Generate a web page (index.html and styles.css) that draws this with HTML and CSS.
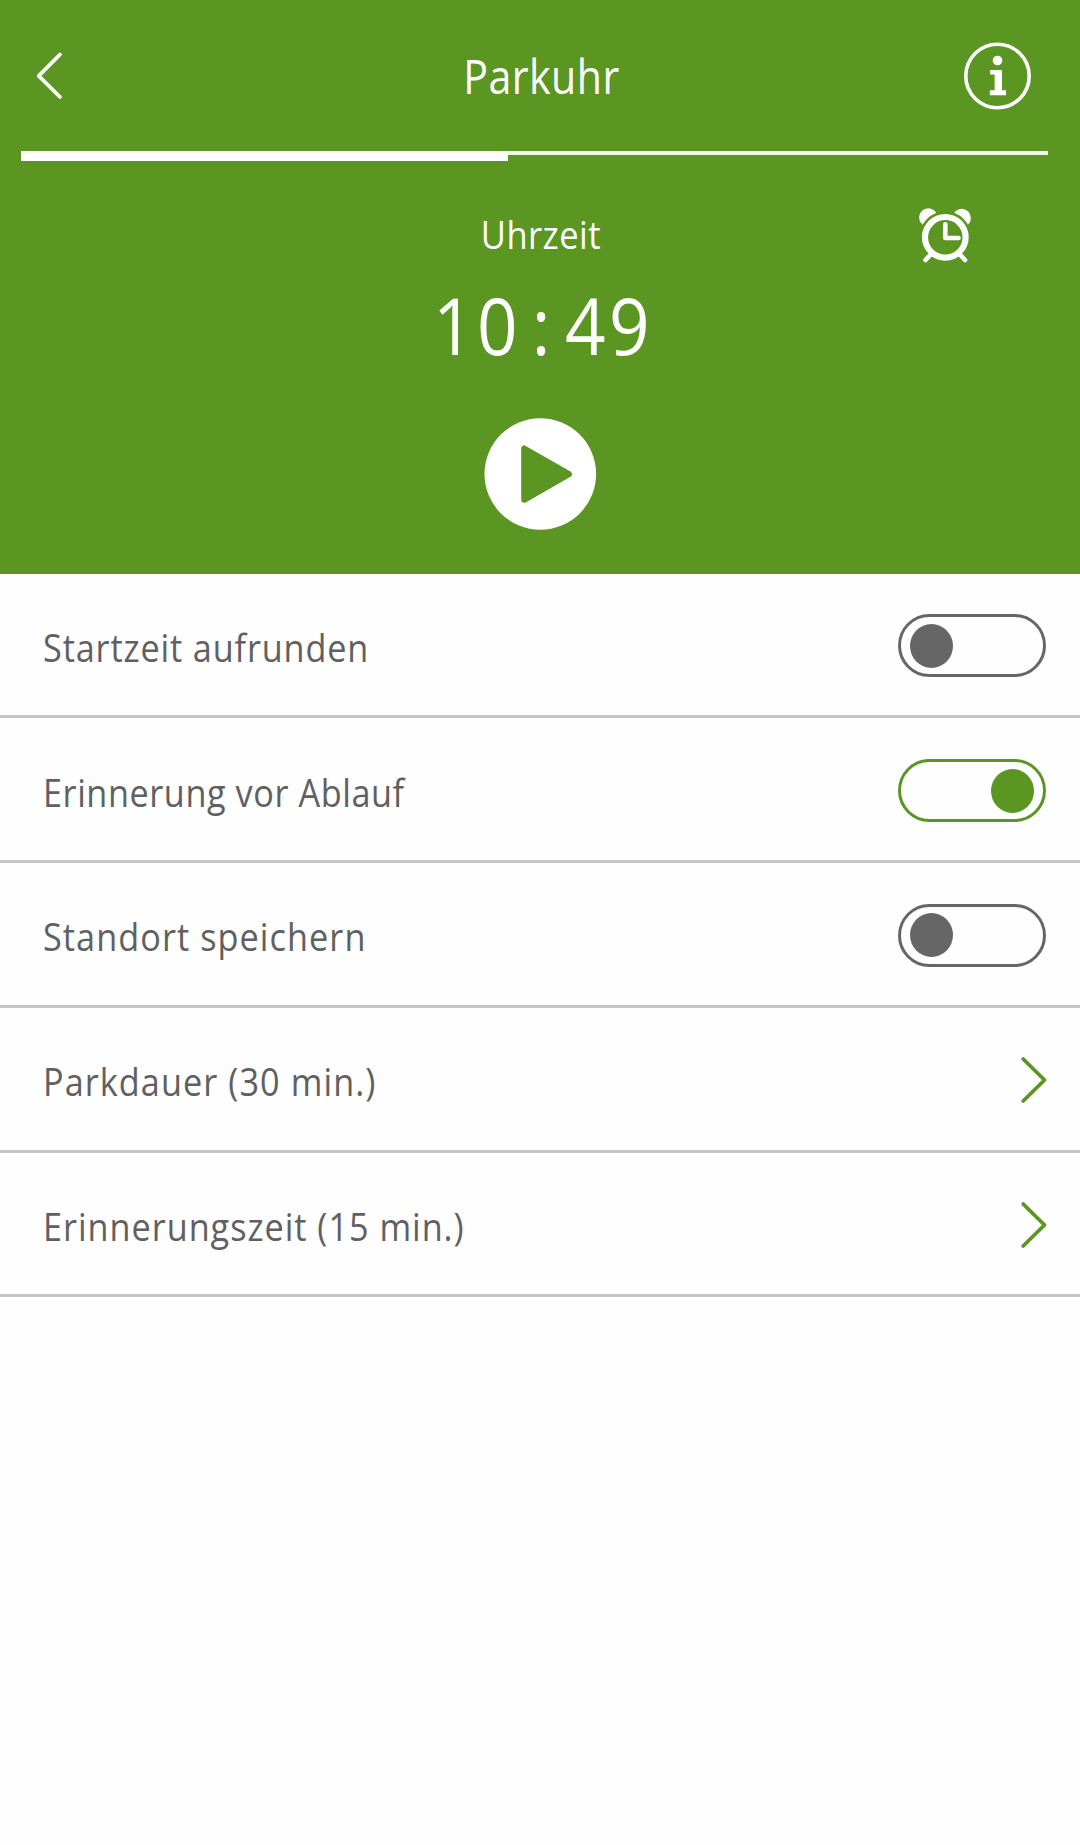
FILE: index.html
```html
<!DOCTYPE html>
<html lang="de">
<head>
<meta charset="utf-8">
<title>Parkuhr</title>
<link rel="stylesheet" href="styles.css">
</head>
<body>
<header class="hero">
  <div class="topbar">
    <svg class="back" viewBox="0 0 30 50"><path d="M26 3.500 4.700 24.800l21.300 21.200"/></svg>
    <h1 class="title">Parkuhr</h1>
    <svg class="info" viewBox="0 0 68 68">
      <circle class="ring" cx="33.500" cy="34" r="31.700"/>
      <circle cx="33.500" cy="18.500" r="4.800"/>
      <path d="M26 28h12v20.200h4v5H25.800v-5h4.800V32.500H26z"/>
    </svg>
  </div>
  <div class="track"><div class="progress"></div></div>
  <div class="clock">
    <div class="label">Uhrzeit</div>
    <svg class="alarm" viewBox="0 0 54 56">
      <circle cx="10.300" cy="10.500" r="9.200"/>
      <circle cx="43.700" cy="11" r="9.200"/>
      <circle class="gap" cx="27.300" cy="30.300" r="26"/>
      <path class="legs" d="M14 46l-6.500 7M40.500 46l6.500 7"/>
      <circle class="dial" cx="27.300" cy="30.300" r="20.300"/>
      <path class="hands" d="M27.300 17.300V31H40.500"/>
    </svg>
  </div>
  <div class="time"><span>1</span><span>0</span><span>:</span><span>4</span><span>9</span></div>
  <svg class="play" viewBox="0 0 113 112"><circle cx="56.300" cy="56" r="55.800"/><path d="M40.200 30.500v51.300L85 56.200z"/></svg>
</header>
<main class="list">
  <div class="row"><span class="text">Startzeit aufrunden</span><div class="toggle"><i class="knob"></i></div></div>
  <div class="row"><span class="text">Erinnerung vor Ablauf</span><div class="toggle on"><i class="knob"></i></div></div>
  <div class="row"><span class="text">Standort speichern</span><div class="toggle"><i class="knob"></i></div></div>
  <div class="row"><span class="text">Parkdauer (30 min.)</span><svg class="next" viewBox="0 0 30 50"><path d="M5.200 4 26.500 25 5.200 46"/></svg></div>
  <div class="row"><span class="text">Erinnerungszeit (15 min.)</span><svg class="next" viewBox="0 0 30 50"><path d="M5.200 4 26.500 25 5.200 46"/></svg></div>
</main>
</body>
</html>
```
FILE: styles.css
```css
* { box-sizing: border-box; }
body {
  margin: 0;
  min-height: 1845px;
  background: #fefefe;
  color: #606060;
  font-family: "Open Sans", sans-serif;
}
svg { display: block; flex: none; }
.hero {
  height: 573.500px;
  background: #5a9621;
  color: #fff;
  display: flex;
  flex-direction: column;
}
.topbar {
  height: 151px;
  padding: 0 48px 0 34px;
  display: grid;
  grid-template-columns: 68px 1fr 68px;
}
.back { width: 30px; height: 50px; margin-top: 51px; }
.back path, .next path { fill: none; stroke: #fff; stroke-width: 3.800; stroke-linecap: round; stroke-linejoin: round; }
.title { margin: 44px 0 0 17px; font-size: 47px; line-height: 64px; font-weight: 400; text-align: center; letter-spacing: .5px; transform: scaleX(.875); }
.info { width: 68px; height: 68px; margin-top: 42px; fill: #fff; }
.ring { fill: none; stroke: #fff; stroke-width: 3.600; }
.track { height: 10px; margin: 0 32px 0 21px; border-top: 4px solid #f4f9ef; }
.progress { width: 487px; height: 10px; margin-top: -4px; background: #fff; }
.clock { height: 116px; display: grid; grid-template-columns: 1fr auto 1fr; }
.label { grid-column: 2; margin: 47px 0 0 1px; font-size: 39px; line-height: 52px; letter-spacing: .5px; transform: scaleX(.885); }
.alarm { width: 54px; height: 56px; margin: 46px 0 0 auto; margin-right: 108px; fill: #fff; }
.gap { fill: #5a9621; }
.dial { fill: #5a9621; stroke: #fff; stroke-width: 6.200; }
.legs, .hands { fill: none; stroke: #fff; stroke-width: 4.600; stroke-linecap: round; stroke-linejoin: round; }
.time { height: 141px; padding-top: 2px; margin-left: 2px; display: flex; justify-content: center; font-size: 78px; line-height: 92px; }
.time span { width: 44px; text-align: center; transform: scaleX(.91); }
.play { width: 113px; height: 112px; margin-left: 484px; fill: #fff; }
.play path { fill: #5a9621; stroke: #5a9621; stroke-width: 6; stroke-linejoin: round; }
.row {
  height: 144.750px;
  padding: 3px 34px 0 43px;
  border-bottom: 3px solid #c6c6c6;
  display: flex;
  align-items: center;
  justify-content: space-between;
}
.text { padding-top: 2px; font-size: 38px; line-height: 52px; letter-spacing: 1.200px; white-space: nowrap; transform: scaleX(.9); transform-origin: left; }
.row:nth-child(1) .text { letter-spacing: .970px; }
.row:nth-child(2) .text { letter-spacing: .650px; }
.row:nth-child(5) .text { letter-spacing: 1.100px; }
.toggle { width: 148px; height: 63px; padding: 0 9px; border: 3px solid #666; border-radius: 32px; display: flex; align-items: center; }
.knob { width: 43px; height: 44px; border-radius: 50%; background: #666; }
.on { border-color: #5a9621; justify-content: flex-end; }
.on .knob { background: #5a9621; }
.next { width: 30px; height: 50px; margin-right: -2px; }
.next path { stroke: #5a9621; }
```
